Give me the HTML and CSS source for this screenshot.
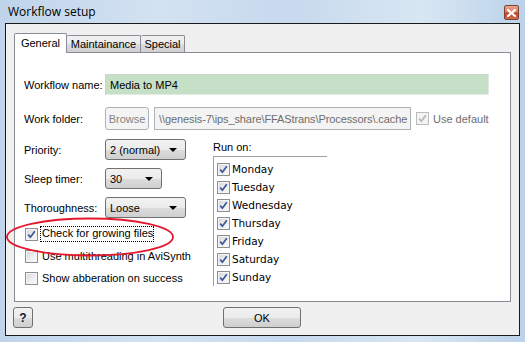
FILE: index.html
```html
<!DOCTYPE html>
<html lang="en">
<head>
    <meta charset="UTF-8">
    <title>Workflow setup</title>
    <link rel="stylesheet" href="styles.css">
</head>
<body>
    <div class="window">
        <!-- Barra de titulo -->
        <div class="titlebar">
            <span class="title">Workflow setup</span>
            <span class="close">
                <svg width="9" height="8" viewBox="0 0 9 8"><path d="M1 1 L8 7 M8 1 L1 7" stroke="#fff" stroke-width="2.2" stroke-linecap="square"/></svg>
            </span>
        </div>

        <div class="client">
            <div class="tabs">
                <div class="tab active tab-general">General</div>
                <div class="tab tab-maint">Maintainance</div>
                <div class="tab tab-special">Special</div>
            </div>

            <div class="panel">
                <div class="row row-name">
                    <span class="lbl">Workflow name:</span>
                    <div class="edit edit-name">Media to MP4</div>
                </div>

                <div class="row row-folder">
                    <span class="lbl">Work folder:</span>
                    <div class="btn btn-browse">Browse</div>
                    <div class="edit edit-path"><span class="path-text">\\genesis-7\ips_share\FFAStrans\Processors\.cache</span></div>
                    <span class="check disabled"><svg viewBox="0 0 11 11"><path d="M2.2 5.6 L4.4 8.2 L8.8 2.2" /></svg></span>
                    <span class="muted">Use default</span>
                </div>

                <div class="lower">
                    <div class="col-left">
                        <div class="row row-select">
                            <span class="lbl">Priority:</span>
                            <div class="combo combo-wide">2 (normal)<span class="arrow"></span></div>
                        </div>
                        <div class="row row-select">
                            <span class="lbl">Sleep timer:</span>
                            <div class="combo combo-small">30<span class="arrow"></span></div>
                        </div>
                        <div class="row row-select">
                            <span class="lbl">Thoroughness:</span>
                            <div class="combo combo-wide">Loose<span class="arrow"></span></div>
                        </div>

                        <div class="options">
                            <div class="option">
                                <span class="check"><svg viewBox="0 0 11 11"><path d="M2.2 5.6 L4.4 8.2 L8.8 2.2" /></svg></span>
                                <span class="focus">Check for growing files</span>
                            </div>
                            <div class="option">
                                <span class="check"></span>
                                <span class="opt-text">Use multithreading in AviSynth</span>
                            </div>
                            <div class="option">
                                <span class="check"></span>
                                <span class="opt-text">Show abberation on success</span>
                            </div>
                        </div>
                    </div>

                    <div class="col-right">
                        <div class="runon">Run on:</div>
                        <div class="daylist">
                            <div class="day"><span class="check"><svg viewBox="0 0 11 11"><path d="M2.2 5.6 L4.4 8.2 L8.8 2.2" /></svg></span>Monday</div>
                            <div class="day"><span class="check"><svg viewBox="0 0 11 11"><path d="M2.2 5.6 L4.4 8.2 L8.8 2.2" /></svg></span>Tuesday</div>
                            <div class="day"><span class="check"><svg viewBox="0 0 11 11"><path d="M2.2 5.6 L4.4 8.2 L8.8 2.2" /></svg></span>Wednesday</div>
                            <div class="day"><span class="check"><svg viewBox="0 0 11 11"><path d="M2.2 5.6 L4.4 8.2 L8.8 2.2" /></svg></span>Thursday</div>
                            <div class="day"><span class="check"><svg viewBox="0 0 11 11"><path d="M2.2 5.6 L4.4 8.2 L8.8 2.2" /></svg></span>Friday</div>
                            <div class="day"><span class="check"><svg viewBox="0 0 11 11"><path d="M2.2 5.6 L4.4 8.2 L8.8 2.2" /></svg></span>Saturday</div>
                            <div class="day"><span class="check"><svg viewBox="0 0 11 11"><path d="M2.2 5.6 L4.4 8.2 L8.8 2.2" /></svg></span>Sunday</div>
                        </div>
                    </div>
                </div>
            </div>

            <div class="footer">
                <div class="btn btn-help">?</div>
                <div class="btn btn-ok">OK</div>
            </div>
        </div>

        <!-- Marca roja sobre la opcion -->
        <svg class="ring" width="172" height="42" viewBox="0 0 172 42">
            <ellipse cx="85" cy="20" rx="83" ry="18.5" fill="none" stroke="#e3182c" stroke-width="1.8"/>
        </svg>
    </div>
</body>
</html>
```

FILE: styles.css
```css
body {
    margin: 0;
    padding: 0;
    font-family: "Liberation Sans", Arial, sans-serif;
    font-size: 11px;
    color: #000;
}
.window {
    position: relative;
    width: 525px;
    height: 342px;
    overflow: hidden;
    background: linear-gradient(to right, #bfd4ea 0%, #d3e2f2 30%, #c6d9ed 55%, #d8e6f3 80%, #bcd2e9 100%);
}
.titlebar {
    height: 23px;
    display: flex;
    align-items: center;
    justify-content: space-between;
    padding: 0 6px 0 8px;
    box-sizing: border-box;
}
.title {
    font-family: "Open Sans", "Noto Sans", sans-serif;
    font-size: 12px;
    color: #000;
    margin-top: -1px;
}
.close {
    width: 15px;
    height: 15px;
    box-sizing: border-box;
    border: 1px solid #7a4536;
    border-radius: 2px;
    background: linear-gradient(to bottom, #eba690 0%, #dc7a5f 45%, #c7452a 55%, #d36a4b 100%);
    display: flex;
    align-items: center;
    justify-content: center;
    margin-top: 2px;
}
.client {
    margin-left: 5px;
    width: 515px;
    height: 313px;
    box-sizing: border-box;
    border: 1px solid #1a1a1a;
    background: #f0f0f0;
    padding: 9px 0 0 8px;
}
.tabs {
    display: flex;
    align-items: flex-end;
    height: 19px;
    position: relative;
    z-index: 1;
}
.tab {
    height: 17px;
    box-sizing: border-box;
    padding-top: 2px;
    text-align: center;
    border: 1px solid #898c95;
    border-bottom: none;
    border-left: none;
    background: linear-gradient(to bottom, #f2f2f2 0%, #ebebeb 50%, #dddddd 51%, #cfcfcf 100%);
    border-radius: 2px 2px 0 0;
}
.tab.active {
    height: 20px;
    margin-bottom: -1px;
    background: #fff;
    border-left: 1px solid #898c95;
    padding-top: 3px;
}
.tab-general {
    width: 53px;
}
.tab-maint {
    width: 74px;
}
.tab-special {
    width: 44px;
}
.panel {
    width: 497px;
    height: 250px;
    box-sizing: border-box;
    border: 1px solid #898c95;
    background: #fff;
    padding: 21px 0 0 9px;
}
.row {
    display: flex;
    align-items: center;
}
.lbl {
    width: 81px;
    flex: none;
}
.edit {
    box-sizing: border-box;
    border: 1px solid #abadb3;
    padding: 0 3px;
    white-space: nowrap;
    overflow: hidden;
    display: flex;
    align-items: center;
}
.row-name {
    height: 21px;
}
.edit-name {
    width: 384px;
    height: 21px;
    background: #c6e0c7;
    border-color: #c9d7ca #dfe9df #e3ece3 #c9d7ca;
    padding-left: 4px;
}
.row-folder {
    height: 23px;
    margin-top: 12px;
}
.btn {
    box-sizing: border-box;
    border: 1px solid #707070;
    border-radius: 3px;
    background: linear-gradient(to bottom, #f2f2f2 0%, #ebebeb 50%, #dddddd 51%, #cfcfcf 100%);
    display: flex;
    align-items: center;
    justify-content: center;
}
.btn-browse {
    width: 44px;
    height: 23px;
    border-color: #adb2b5;
    background: #f4f4f4;
    color: #838383;
}
.edit-path {
    width: 257px;
    height: 23px;
    margin-left: 5px;
    background: #f4f4f4;
    border-color: #adb2b5;
    color: #6d6d6d;
    padding-left: 4px;
}
.path-text {
    letter-spacing: -0.1px;
}
.check {
    width: 13px;
    height: 13px;
    flex: none;
    box-sizing: border-box;
    border: 1px solid #8e8f8f;
    background: linear-gradient(135deg, #d4d6da 0%, #eef0f2 60%, #fbfbfb 100%);
    box-shadow: inset 0 0 0 1px #f4f4f4;
    display: inline-flex;
    align-items: center;
    justify-content: center;
}
.check svg {
    width: 11px;
    height: 11px;
}
.check path {
    fill: none;
    stroke: #3d5496;
    stroke-width: 1.7;
}
.check.disabled {
    border-color: #bcbcbc;
    background: #f4f4f4;
    margin-left: 5px;
}
.check.disabled path {
    stroke: #b5b5b5;
}
.muted {
    color: #6d6d6d;
    margin-left: 4px;
}
.lower {
    display: flex;
    margin-top: 9px;
}
.col-left {
    width: 189px;
    flex: none;
}
.row-select {
    height: 21px;
    margin-bottom: 8px;
}
.combo {
    position: relative;
    height: 21px;
    box-sizing: border-box;
    border: 1px solid #707070;
    border-radius: 3px;
    background: linear-gradient(to bottom, #f2f2f2 0%, #ebebeb 50%, #dddddd 51%, #cfcfcf 100%);
    padding: 0 0 0 4px;
    display: flex;
    align-items: center;
}
.combo-wide {
    width: 81px;
}
.combo-small {
    width: 57px;
}
.arrow {
    position: absolute;
    right: 8px;
    top: 8px;
    width: 0;
    height: 0;
    border-left: 4px solid transparent;
    border-right: 4px solid transparent;
    border-top: 4px solid #000;
}
.options {
    margin-top: 7px;
}
.option {
    display: flex;
    align-items: center;
    height: 16px;
    margin-bottom: 6px;
    padding-left: 1px;
}
.option .check {
    margin-right: 2px;
}
.focus {
    border: 1px dotted #000;
    padding: 0 0 1px 1px;
    line-height: 13px;
}
.opt-text {
    padding-left: 2px;
}
.runon {
    height: 18px;
    line-height: 18px;
    margin-top: -1px;
}
.daylist {
    width: 114px;
    height: 130px;
    box-sizing: border-box;
    border-left: 1px solid #a0a0a0;
    border-top: 1px solid #a0a0a0;
    padding: 3px 0 0 3px;
}
.day {
    display: flex;
    align-items: center;
    height: 18px;
    font-family: "DejaVu Sans", Verdana, sans-serif;
    font-size: 10.5px;
}
.day .check {
    margin-right: 2px;
}
.footer {
    display: flex;
    align-items: center;
    margin-top: 5px;
    margin-left: -1px;
}
.btn-help {
    width: 20px;
    height: 21px;
    font-weight: bold;
    font-size: 12px;
    color: #101a3a;
}
.btn-ok {
    width: 78px;
    height: 21px;
    margin-left: 190px;
}
.ring {
    position: absolute;
    left: 5px;
    top: 217px;
}
```
